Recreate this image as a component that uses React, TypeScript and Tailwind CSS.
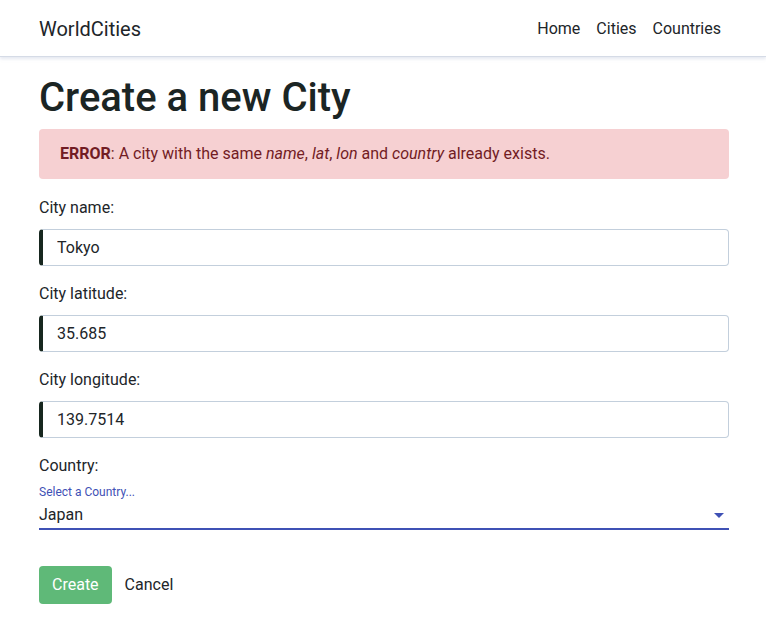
import { useState } from "react";

// 입력 필드 (왼쪽 굵은 테두리)
const Field = ({ label, value }: { label: string; value: string }) => (
  <div className="mb-[16px]">
    <label className="block mb-[9px] text-[16px] leading-[24px]">{label}</label>
    <input
      defaultValue={value}
      className="block w-full h-[37px] pl-[14px] pr-3 text-[16px] text-[#212529] bg-white border border-[#c3cfdc] border-l-[4px] border-l-[#17271f] rounded-[4px] outline-none"
    />
  </div>
);

export default function App() {
  const [country] = useState("Japan");

  return (
    <div className="min-h-[623px] bg-white text-[#212529] font-['Roboto','Liberation_Sans',sans-serif]">
      <header className="h-[57px] border-b border-[#d5dbe6] shadow-[0_2px_3px_rgba(180,190,215,0.35)]">
        <div className="mx-[39px] h-full flex items-center justify-between">
          <span className="text-[20px] leading-[28px] pt-[1px]">WorldCities</span>
          <nav className="flex gap-[16px] mr-[6px] text-[16px] leading-[24px] pt-[1px]">
            <a>Home</a>
            <a>Cities</a>
            <a>Countries</a>
          </nav>
        </div>
      </header>

      <main className="mx-[39px] w-[690px]">
        <h1 className="mt-[17px] mb-[7px] text-[40px] leading-[48px] font-medium text-[#1b2524]">
          Create a new City
        </h1>

        <div className="h-[50px] mb-[17px] px-[21px] flex items-center bg-[#f6d0d2] text-[#721c24] text-[16px] rounded-[4px]">
          <span>
            <strong className="font-bold">ERROR</strong>: A city with the same{" "}
            <i>name</i>, <i>lat</i>, <i>lon</i> and <i>country</i> already exists.
          </span>
        </div>

        <Field label="City name:" value="Tokyo" />
        <Field label="City latitude:" value="35.685" />
        <Field label="City longitude:" value="139.7514" />

        <div>
          <label className="block text-[16px] leading-[24px]">Country:</label>
          <div className="mt-[7px] text-[12px] leading-[14px] text-[#3f51b5]">Select a Country...</div>
          <div className="flex items-center justify-between h-[24px] mt-[4px] border-b-2 border-[#3f51b5] pb-[1px] box-content">
            <span className="text-[16px]">{country}</span>
            <svg width="10" height="5" viewBox="0 0 10 5" className="mr-[5px]">
              <path d="M0 0h10L5 5z" fill="#3f51b5" />
            </svg>
          </div>
        </div>

        <div className="mt-[36px] flex items-center gap-[13px]">
          <button className="h-[38px] px-[13px] rounded-[4px] bg-[#5fb978] text-white text-[16px]">
            Create
          </button>
          <button className="h-[38px] px-[0px] text-[16px] text-[#212529]">Cancel</button>
        </div>
      </main>
    </div>
  );
}
